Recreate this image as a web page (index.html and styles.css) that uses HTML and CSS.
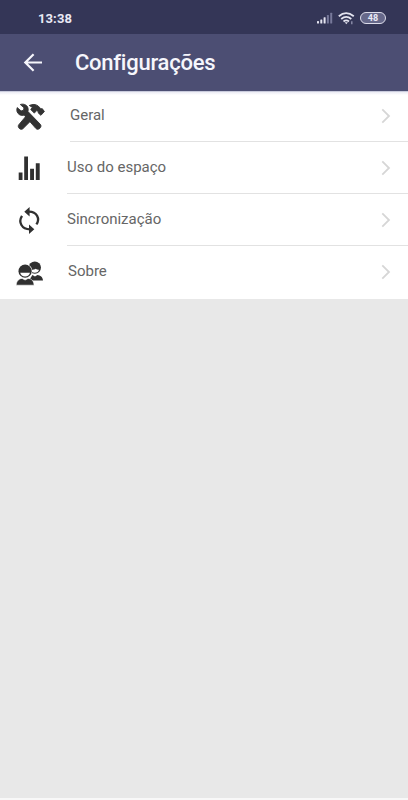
FILE: index.html
```html
<!DOCTYPE html>
<html lang="pt">

<head>
    <meta charset="utf-8">
    <meta name="viewport" content="width=device-width, initial-scale=1.0">
    <title>Configurações</title>

    <link rel="stylesheet" href="styles.css">
</head>

<body>

    <div class="status">
        <span class="hora">13:38</span>
        <div class="sinais">
            <svg class="rede" width="16" height="12" viewBox="0 0 16 12" fill="#e4e4f0">
                <rect x="0" y="9" width="2" height="2.5" rx=".5" />
                <rect x="3.3" y="7.5" width="2" height="4" rx=".5" />
                <rect x="6.6" y="5.3" width="2" height="6.2" rx=".5" />
                <rect x="9.9" y="3" width="2" height="8.5" rx=".5" fill="#77799a" />
                <rect x="13.2" y=".7" width="2" height="10.8" rx=".5" fill="#77799a" />
            </svg>
            <svg class="wifi" width="17" height="13" viewBox="0 0 17 13" fill="none" stroke="#e4e4f0" stroke-width="1.8">
                <path d="M.8 4.3Q8 -2 15.8 4.3M3.2 7Q8.2 2.8 13.3 7M5.5 9.5Q8.2 7.4 11 9.5" />
                <path d="M6.7 10.3h3.2l-1.6 1.9z" fill="#e4e4f0" stroke="none" />
                <path d="M13.8 9.3v3" stroke="#8e90ac" stroke-width="1.4" />
            </svg>
            <span class="bateria">48</span>
        </div>
    </div>

    <header>
        <svg class="voltar" width="20" height="20" viewBox="0 0 20 20" fill="none" stroke="#f6f6fc" stroke-width="2.2">
            <path d="M19 9.5H2.5M10.6 1.2L2.3 9.5l8.3 8.3" />
        </svg>
        <h1>Configurações</h1>
    </header>

    <main class="lista">
        <a class="item geral">
            <svg class="icone" width="30" height="30" viewBox="0 0 30 30" fill="#333" stroke="#333" stroke-width=".9" stroke-linejoin="round">
                <path d="M5.3 2.5L9 5.8l-.5 2.5-2.400.6L2.200 5.600C1.200 8.400 2 11.200 4.500 12.700c1.500.9 3 .9 4.600.4L21 26.600c2.400 2.300 6.600-1.700 4.300-4.300L13 9.600c.8-3.600-.6-6.200-3.400-7.100-1.300-.5-2.800-.5-4.300 0z" />
                <path d="M14.3 3.500c3.200-1.600 6.400-1.400 8.900.5l2.800 2.900 1.200-.3 2.200 2.900-3.500 3.800-2.700-2.400.1-1.200-1.500-1.200-2.500 2.600-3.600-3.600 1.700-2.100z" />
                <path d="M10.900 14.300l4.700 4.700-7.700 7.700c-2.400 2-6-1.600-4.100-4z" />
            </svg>
            <span class="nome">Geral</span>
            <svg class="seta" width="10" height="16" viewBox="0 0 10 16"><path d="M1.3 1.3L8 8l-6.7 6.7" /></svg>
        </a>
        <a class="item">
            <svg class="icone" width="30" height="30" viewBox="0 0 30 30" fill="#303030">
                <path d="M3.7 19.5h3.8V27H3.700zM9.200 3.500h3.800V27H9.200zM15.100 15.700H19V27h-3.900zM20.800 10.300h3.900V27h-3.900z" />
            </svg>
            <span class="nome">Uso do espaço</span>
            <svg class="seta" width="10" height="16" viewBox="0 0 10 16"><path d="M1.3 1.3L8 8l-6.7 6.7" /></svg>
        </a>
        <a class="item">
            <svg class="icone" width="30" height="30" viewBox="0 0 30 30" fill="none" stroke="#303030" stroke-width="2.3">
                <path d="M14 6.700c7.800 0 11.400 6.800 7.400 12.700M15 24.300c-8.200 0-12-7-8-13.400" />
                <path d="M14.600 2v9.400L9.300 6.700zM14 19.600V29l5.300-4.700z" fill="#303030" stroke="none" />
            </svg>
            <span class="nome">Sincronização</span>
            <svg class="seta" width="10" height="16" viewBox="0 0 10 16"><path d="M1.3 1.3L8 8l-6.7 6.7" /></svg>
        </a>
        <a class="item sobre">
            <svg class="icone" width="30" height="30" viewBox="0 0 30 30" fill="#303030">
                <circle cx="19.8" cy="9.6" r="6.2" />
                <path d="M16 11.800c2.500 0 3.700-.3 4.700-1 1 .7 2 .9 3.300 1-.4 2-2 3-4.200 3s-3.600-1.200-3.800-3z" fill="#fff" />
                <path d="M14 22.500h14c-.2-3.600-2.600-5-5.600-5.500l-2.400 1.600-2.600-1.600z" />
                <path d="M1.200 27.200c.3-4.300 2.500-6.500 5.900-6.800l3 1.600 3-1.600c3.500.3 5.700 2.500 6 6.800z" stroke="#fff" stroke-width=".6" />
                <circle cx="10.1" cy="13.2" r="7.3" fill="#fff" />
                <circle cx="10.1" cy="13.2" r="6.6" />
                <path d="M5.200 14.800h9.800c-.4 2.400-2.400 3.700-4.900 3.700s-4.500-1.300-4.900-3.700z" fill="#fff" />
            </svg>
            <span class="nome">Sobre</span>
            <svg class="seta" width="10" height="16" viewBox="0 0 10 16"><path d="M1.3 1.3L8 8l-6.7 6.7" /></svg>
        </a>
    </main>

</body>

</html>
```
FILE: styles.css
```css
* {
    box-sizing: border-box;
}

body {
    margin: 0;
    height: 800px;
    display: flex;
    flex-direction: column;
    font-family: Roboto, sans-serif;
    background-color: #e8e8e8;
    border-bottom: 2px solid #f8f8f8;
}

.status {
    height: 34px;
    padding: 2px 22px 0 38px;
    display: flex;
    align-items: center;
    justify-content: space-between;
    background-color: #343657;
    color: #e9e9f5;
}

.hora {
    font-size: 13px;
    font-weight: 700;
    letter-spacing: 0.1px;
}

.sinais {
    display: flex;
    align-items: center;
}

.wifi {
    margin: 0 5px 0 5px;
}

.bateria {
    width: 26px;
    height: 12px;
    border: 1.5px solid #dcdcea;
    border-radius: 6px;
    background-color: #66688a;
    font-size: 9px;
    font-weight: 700;
    line-height: 10px;
    text-align: center;
}

header {
    height: 57px;
    padding-left: 23px;
    display: flex;
    align-items: center;
    background-color: #4c4e73;
}

h1 {
    margin: 0 0 0 32px;
    font-size: 22px;
    font-weight: 500;
    letter-spacing: -0.25px;
    color: #f6f6fc;
}

.lista {
    border-top: 1px solid #c9cbdc;
    background: linear-gradient(#ebebf4, #fff 3px);
}

.item {
    height: 52px;
    padding: 0 17px 0 15px;
    display: flex;
    align-items: center;
    background: linear-gradient(#e2e2e2, #e2e2e2) 67px 100% / 341px 1.5px no-repeat;
}

.nome {
    flex: 1;
    margin-left: 22px;
    padding-bottom: 3px;
    font-size: 15px;
    color: #666;
}

.seta {
    margin-bottom: 1px;
    fill: none;
    stroke: #d6d6d6;
    stroke-width: 1.8;
}

.geral {
    height: 50px;
    background-position: 70px 100%;
}

.geral .nome {
    margin-left: 25px;
    padding-bottom: 5px;
}

.geral .seta {
    margin-bottom: 3px;
}

.sobre {
    height: 53px;
    background: none;
}

.sobre .nome {
    margin-left: 23px;
}
```
